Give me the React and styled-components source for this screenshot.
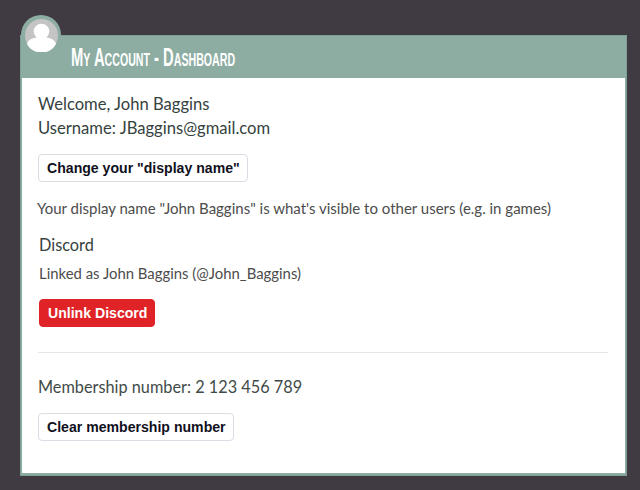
import React from "react";
import styled, { createGlobalStyle } from "styled-components";

const GlobalStyle = createGlobalStyle`
  html, body {
    margin: 0;
    padding: 0;
    background: #403b42;
  }
  * { box-sizing: border-box; }
`;

export default function App() {
  return (
    <Page>
      <GlobalStyle />
      <Panel>
        <Avatar>
          <svg viewBox="0 0 33 33" width="33" height="33">
            <circle cx="16.5" cy="16.5" r="16.5" fill="#c4c4c4" />
            <circle cx="16.5" cy="12.5" r="7.8" fill="#fff" />
            <path d="M2 25c1.500-5 7-7 14.500-7s13 2 14.500 7a16.500 16.500 0 0 1-29 0z" fill="#fff" />
          </svg>
        </Avatar>
        <Header>
          <Title>My Account - Dashboard</Title>
        </Header>
        <Body>
          <Lines>
            <Line>Welcome, John Baggins</Line>
            <Line>Username: JBaggins@gmail.com</Line>
          </Lines>
          <Button>Change your "display name"</Button>
          <Note>Your display name "John Baggins" is what's visible to other users (e.g. in games)</Note>
          <SubTitle>Discord</SubTitle>
          <Linked>Linked as John Baggins (@John_Baggins)</Linked>
          <Button $danger>Unlink Discord</Button>
          <Divider />
          <Member>Membership number: 2 123 456 789</Member>
          <Button>Clear membership number</Button>
        </Body>
      </Panel>
    </Page>
  );
}

const Page = styled.div`
  width: 640px;
  height: 490px;
  padding: 35px 13px 14px 20px;
  overflow: hidden;
  font-family: Lato, "Open Sans", sans-serif;
`;

const Panel = styled.section`
  position: relative;
  height: 441px;
  display: flex;
  flex-direction: column;
  background: #8dada3;
  border: 1px solid #7d9f96;
  padding: 0 1px 2px 1px;
`;

const Avatar = styled.div`
  position: absolute;
  left: 0;
  top: -21px;
  width: 40px;
  height: 40px;
  border-radius: 50%;
  background: #8dada3;
  display: flex;
  align-items: center;
  justify-content: center;
  svg { display: block; }
`;

const Header = styled.header`
  height: 42px;
  padding: 5px 0 0 49px;
  flex-shrink: 0;
`;

const Title = styled.h1`
  margin: 0;
  width: 300px;
  font-family: "Liberation Sans Narrow", "Liberation Sans", sans-serif;
  font-size: 25px;
  line-height: 32px;
  font-weight: 700;
  font-variant: small-caps;
  color: #fff;
  white-space: nowrap;
  transform: scaleX(0.59);
  transform-origin: left center;
`;

const Body = styled.div`
  flex: 1;
  background: #fff;
  padding: 14px 17px 0 16px;
  display: flex;
  flex-direction: column;
  align-items: flex-start;
`;

const Lines = styled.div`
  margin-bottom: 14px;
`;

const Line = styled.div`
  font-size: 16.6px;
  line-height: 24px;
  color: #35423e;
`;

const Button = styled.button`
  height: 28px;
  padding: 0 7px 0 8px;
  margin-left: ${(p) => (p.$danger ? "1px" : "0")};
  border: 1px solid ${(p) => (p.$danger ? "#df2326" : "#dcdce4")};
  border-radius: 4px;
  background: ${(p) => (p.$danger ? "#df2326" : "#fff")};
  color: ${(p) => (p.$danger ? "#fff" : "#10101c")};
  font-family: "Liberation Sans", Arial, sans-serif;
  font-size: 14.1px;
  font-weight: 700;
  white-space: nowrap;
`;

const Note = styled.p`
  margin: 15px 0 0 -1px;
  font-size: 15px;
  line-height: 22px;
  color: #4c4c4c;
  white-space: nowrap;
`;

const SubTitle = styled.h2`
  margin: 15px 0 0 1px;
  font-size: 16.3px;
  line-height: 22px;
  font-weight: 400;
  color: #35423e;
`;

const Linked = styled.p`
  margin: 6px 0 15px 1px;
  font-size: 14.9px;
  line-height: 22px;
  color: #4c4c4c;
`;

const Divider = styled.hr`
  align-self: stretch;
  margin: 25px 0 0;
  border: none;
  border-top: 1px solid #e6e6e6;
`;

const Member = styled.p`
  margin: 23px 0 15px;
  font-size: 16.3px;
  line-height: 22px;
  color: #3f4b48;
`;
